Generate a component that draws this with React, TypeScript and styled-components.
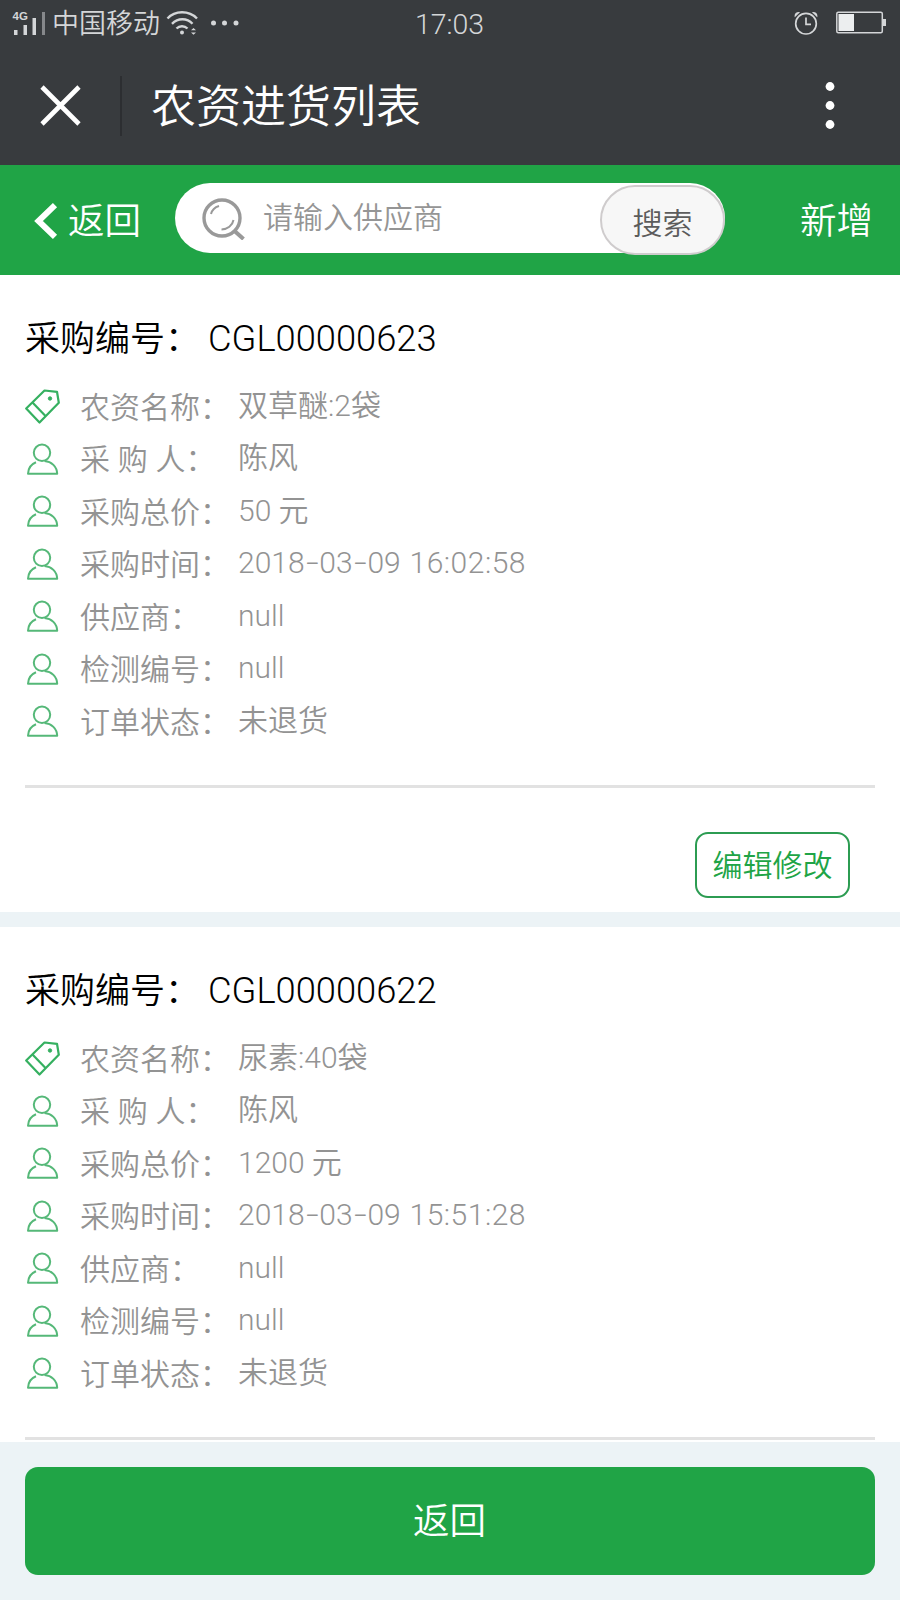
import React from "react";
import styled, { createGlobalStyle } from "styled-components";

const green = "#20a446";

const GlobalStyle = createGlobalStyle`
  * { box-sizing: border-box; }
  body {
    margin: 0;
    background: #fff;
    font-family: Roboto, "Noto Sans CJK SC", sans-serif;
    font-weight: 350;
  }
  button, input { font: inherit; }
`;

const Screen = styled.div`
  display: flex;
  flex-direction: column;
  width: 900px;
  height: 1600px;
  overflow: hidden;
  background: #fff;
`;

const StatusBar = styled.div`
  display: grid;
  grid-template-columns: 1fr auto 1fr;
  align-items: center;
  height: 46px;
  flex: none;
  padding: 0 14px 0 12px;
  background: #383b3e;
  color: #d4d6d8;
`;

const StatusGroup = styled.div<{ $end?: boolean }>`
  display: flex;
  align-items: center;
  justify-content: ${(p) => (p.$end ? "flex-end" : "flex-start")};
  gap: ${(p) => (p.$end ? "18px" : "6px")};
  padding-bottom: ${(p) => (p.$end ? "2px" : "1px")};
`;

const Carrier = styled.span`
  margin-left: -1px;
  font-size: 27px;
  line-height: 44px;
  padding-top: 2px;
`;

const Clock = styled.span`
  font-size: 28.5px;
  line-height: 44px;
  padding: 3px 0 0 1px;
`;

const TitleBar = styled.header`
  display: flex;
  align-items: center;
  height: 119px;
  flex: none;
  padding: 0 64px 0 39px;
  background: #383b3e;
  color: #fff;
`;

const Divider = styled.span`
  width: 2px;
  height: 60px;
  margin: 0 29px 0 38px;
  background: #2c2e31;
`;

const PageTitle = styled.h1`
  flex: 1;
  margin: 0;
  padding-top: 4px;
  font-size: 45px;
  font-weight: 350;
  line-height: 60px;
`;

const Toolbar = styled.div`
  display: flex;
  align-items: center;
  height: 110px;
  flex: none;
  padding: 2px 27px 0 34px;
  background: ${green};
  color: #fff;
`;

const TextAction = styled.button`
  display: flex;
  align-items: center;
  gap: 10px;
  padding: 2px 0 0;
  border: 0;
  background: none;
  color: inherit;
  font-size: 36.5px;
  line-height: 54px;
`;

const SearchBox = styled.div`
  display: flex;
  align-items: center;
  width: 550px;
  height: 70px;
  margin: -6px auto 0 34px;
  padding-left: 26px;
  border-radius: 35px;
  background: #fff;
`;

const SearchInput = styled.input`
  flex: 1;
  min-width: 0;
  height: 60px;
  margin-left: 18px;
  padding: 0 0 1px;
  border: 0;
  outline: 0;
  background: none;
  font-size: 30px;
  &::placeholder { color: #959595; opacity: 1; }
`;

const SearchButton = styled.button`
  width: 125px;
  height: 70px;
  margin-top: 4px;
  padding: 1px 0 0;
  border: 2px solid #cfcccd;
  border-radius: 35px;
  background: #f7f7f7;
  color: #5c5c5c;
  font-size: 30px;
`;

const List = styled.main`
  flex: 1;
  min-height: 0;
  overflow: hidden;
  display: flex;
  flex-direction: column;
  gap: 15px;
  background: #ecf3f6;
`;

const Card = styled.section`
  flex: none;
  height: 637px;
  padding: 37px 25px 0;
  background: #fff;
`;

const CardTitle = styled.h2`
  display: flex;
  margin: 0 0 14px;
  color: #000;
  font-size: 35px;
  font-weight: 350;
  line-height: 54px;
`;

const OrderLabel = styled.span`
  width: 183px;
  padding-top: 1px;
`;

const OrderNo = styled.span`
  font-size: 36.3px;
`;

const Row = styled.div`
  display: flex;
  align-items: center;
  height: 52.5px;
  color: #939393;
  font-size: 30px;
  line-height: 50px;
`;

const IconCell = styled.span`
  display: flex;
  width: 55px;
`;

const Label = styled.span`
  width: 158px;
  padding-top: 1px;
  white-space: pre;
  word-spacing: 0.5px;
`;

const Value = styled.span`
  margin-top: -3px;
  white-space: pre;
`;

const Dash = styled.span`
  display: inline-block;
  width: 14.8px;
  text-align: center;
  transform: scaleX(1.5);
`;

const TimeOfDay = styled.span`
  margin-left: 1px;
  letter-spacing: 0.5px;
`;

const CardFooter = styled.div`
  display: flex;
  justify-content: flex-end;
  margin-top: 36px;
  padding: 44px 25px 0 0;
  border-top: 3px solid #e2e2e2;
`;

const EditButton = styled.button`
  width: 155px;
  height: 66px;
  padding: 0 0 4px;
  border: 2.5px solid #2c9c52;
  border-radius: 13px;
  background: #fff;
  color: ${green};
  font-size: 30px;
`;

const Footer = styled.footer`
  flex: none;
  height: 158px;
  padding: 25px;
  background: #ecf3f6;
`;

const BackButton = styled.button`
  width: 100%;
  height: 108px;
  padding: 0 1px 5px 0;
  border: 0;
  border-radius: 13px;
  background: ${green};
  color: #fff;
  font-size: 36.5px;
`;

const SignalIcon = () => (
  <svg width="35" height="28" viewBox="0 0 35 28" fill="#d4d6d8">
    <text x="0.5" y="11" fontSize="11.5" fontWeight="700" fontFamily="Liberation Sans, sans-serif">4G</text>
    <path d="M2 21h3.500v5H2zM11.500 16h3.500v10h-3.500zM20.500 9h3.500v17h-3.500z" />
    <path d="M30 3h3v23h-3z" opacity=".5" />
  </svg>
);

const WifiIcon = () => (
  <svg width="33" height="26" viewBox="0 0 33 26" fill="none" stroke="#d4d6d8" strokeWidth="2.400">
    <path d="M1.500 8.500C9 .2 23 .2 31 8.500M6 13.800c6-6 15-6 20.500 0M10.500 18.500c3-3 8-3 11 0" />
    <circle cx="16" cy="22.500" r="2" fill="#d4d6d8" stroke="none" />
    <path d="M25 20.300l2.500-2.300 2.500 2.300zM25 22.500l2.500 2.300 2.500-2.300z" fill="#d4d6d8" stroke="none" />
  </svg>
);

const MoreIcon = () => (
  <svg width="40" height="6" viewBox="0 0 40 6" fill="#d4d6d8">
    <circle cx="8.500" cy="3" r="2.500" />
    <circle cx="19.500" cy="3" r="2.500" />
    <circle cx="31" cy="3" r="2.500" />
  </svg>
);

const AlarmIcon = () => (
  <svg width="24" height="24" viewBox="0 0 24 24" fill="none" stroke="#d4d6d8" strokeWidth="1.700">
    <circle cx="12" cy="12.700" r="10.300" />
    <path d="M12 6.500v6.800h5" />
    <path d="M.8 6.300C-.2 3 2.500.3 6 1.200zM23.200 6.300C24.200 3 21.500.3 18 1.200z" fill="#d4d6d8" stroke="none" />
  </svg>
);

const BatteryIcon = () => (
  <svg width="50" height="23" viewBox="0 0 50 23">
    <rect x=".8" y="1.200" width="45.500" height="20.500" rx="1.500" fill="none" stroke="#d4d6d8" strokeWidth="1.500" />
    <path d="M2.500 3h15.500v17H2.500z" fill="#eceeef" />
    <path d="M47 8h3v7h-3z" fill="#d4d6d8" />
  </svg>
);

const CloseIcon = () => (
  <svg width="43" height="43" viewBox="0 0 43 43" stroke="#fff" strokeWidth="4.600">
    <path d="M3 3l37 37M40 3L3 40" />
  </svg>
);

const MenuIcon = () => (
  <svg width="12" height="48" viewBox="0 0 12 48" fill="#fff">
    <circle cx="6" cy="4.500" r="4.400" />
    <circle cx="6" cy="23.500" r="4.400" />
    <circle cx="6" cy="42.500" r="4.400" />
  </svg>
);

const ChevronIcon = () => (
  <svg width="24" height="38" viewBox="0 0 24 38" fill="none" stroke="#fff" strokeWidth="6">
    <path d="M21 2.200L4.500 18 21 33.800" />
  </svg>
);

const SearchIcon = () => (
  <svg width="44" height="44" viewBox="0 0 44 44" fill="none" stroke="#999">
    <circle cx="21" cy="22" r="18" strokeWidth="3.400" />
    <path d="M33 34.500l9.500 8.500" strokeWidth="4" />
    <path d="M10 18c1-3.800 4-6.800 8-8M20.500 33.500c6 0 11-4 12-9.500" strokeWidth="2" />
  </svg>
);

const TagIcon = () => (
  <svg width="35" height="36" viewBox="0 0 35 36" fill="none" stroke="#35b060" strokeWidth="2.200" strokeLinejoin="round">
    <path d="M1.200 19.500L19.500 1.500l12.500 1.300 1.800 11L14.500 33.500z" />
    <path d="M7.500 13.500L20.500 27" />
    <circle cx="25" cy="9.500" r="1.700" fill="#35b060" strokeWidth="1" />
  </svg>
);

const UserIcon = () => (
  <svg width="35" height="34" viewBox="0 0 35 34" fill="none" stroke="#55b878" strokeWidth="2" strokeLinejoin="round">
    <circle cx="17" cy="9.800" r="8.200" />
    <path d="M19.500 18C26.500 18.500 32 23.500 32.200 30.800H3C3.200 25.500 6 21.300 11 19.300" />
  </svg>
);

interface Order {
  no: string;
  fields: [string, React.ReactNode][];
  editable?: boolean;
}

const Timestamp = ({ date, time }: { date: string; time: string }) => (
  <>
    {date.split("-").map((part, i) => (
      <React.Fragment key={i}>
        {i > 0 && <Dash>-</Dash>}
        {part}
      </React.Fragment>
    ))}
    <TimeOfDay>{" " + time}</TimeOfDay>
  </>
);

const buildFields = (goods: string, price: string, date: string, time: string): [string, React.ReactNode][] => [
  ["农资名称：", goods],
  ["采 购 人：", "陈风"],
  ["采购总价：", price],
  ["采购时间：", <Timestamp date={date} time={time} />],
  ["供应商：", "null"],
  ["检测编号：", "null"],
  ["订单状态：", "未退货"],
];

const orders: Order[] = [
  { no: "CGL00000623", fields: buildFields("双草醚:2袋", "50 元", "2018-03-09", "16:02:58"), editable: true },
  { no: "CGL00000622", fields: buildFields("尿素:40袋", "1200 元", "2018-03-09", "15:51:28") },
];

const OrderCard = ({ order }: { order: Order }) => (
  <Card>
    <CardTitle>
      <OrderLabel>采购编号：</OrderLabel>
      <OrderNo>{order.no}</OrderNo>
    </CardTitle>
    {order.fields.map(([label, value], i) => (
      <Row key={label}>
        <IconCell>{i === 0 ? <TagIcon /> : <UserIcon />}</IconCell>
        <Label>{label}</Label>
        <Value>{value}</Value>
      </Row>
    ))}
    <CardFooter>{order.editable && <EditButton>编辑修改</EditButton>}</CardFooter>
  </Card>
);

export default function App() {
  return (
    <>
      <GlobalStyle />
      <Screen>
        <StatusBar>
          <StatusGroup>
            <SignalIcon />
            <Carrier>中国移动</Carrier>
            <WifiIcon />
            <MoreIcon />
          </StatusGroup>
          <Clock>17:03</Clock>
          <StatusGroup $end>
            <AlarmIcon />
            <BatteryIcon />
          </StatusGroup>
        </StatusBar>
        <TitleBar>
          <CloseIcon />
          <Divider />
          <PageTitle>农资进货列表</PageTitle>
          <MenuIcon />
        </TitleBar>
        <Toolbar>
          <TextAction>
            <ChevronIcon />
            返回
          </TextAction>
          <SearchBox>
            <SearchIcon />
            <SearchInput placeholder="请输入供应商" />
            <SearchButton>搜索</SearchButton>
          </SearchBox>
          <TextAction>新增</TextAction>
        </Toolbar>
        <List>
          {orders.map((order) => (
            <OrderCard key={order.no} order={order} />
          ))}
        </List>
        <Footer>
          <BackButton>返回</BackButton>
        </Footer>
      </Screen>
    </>
  );
}
